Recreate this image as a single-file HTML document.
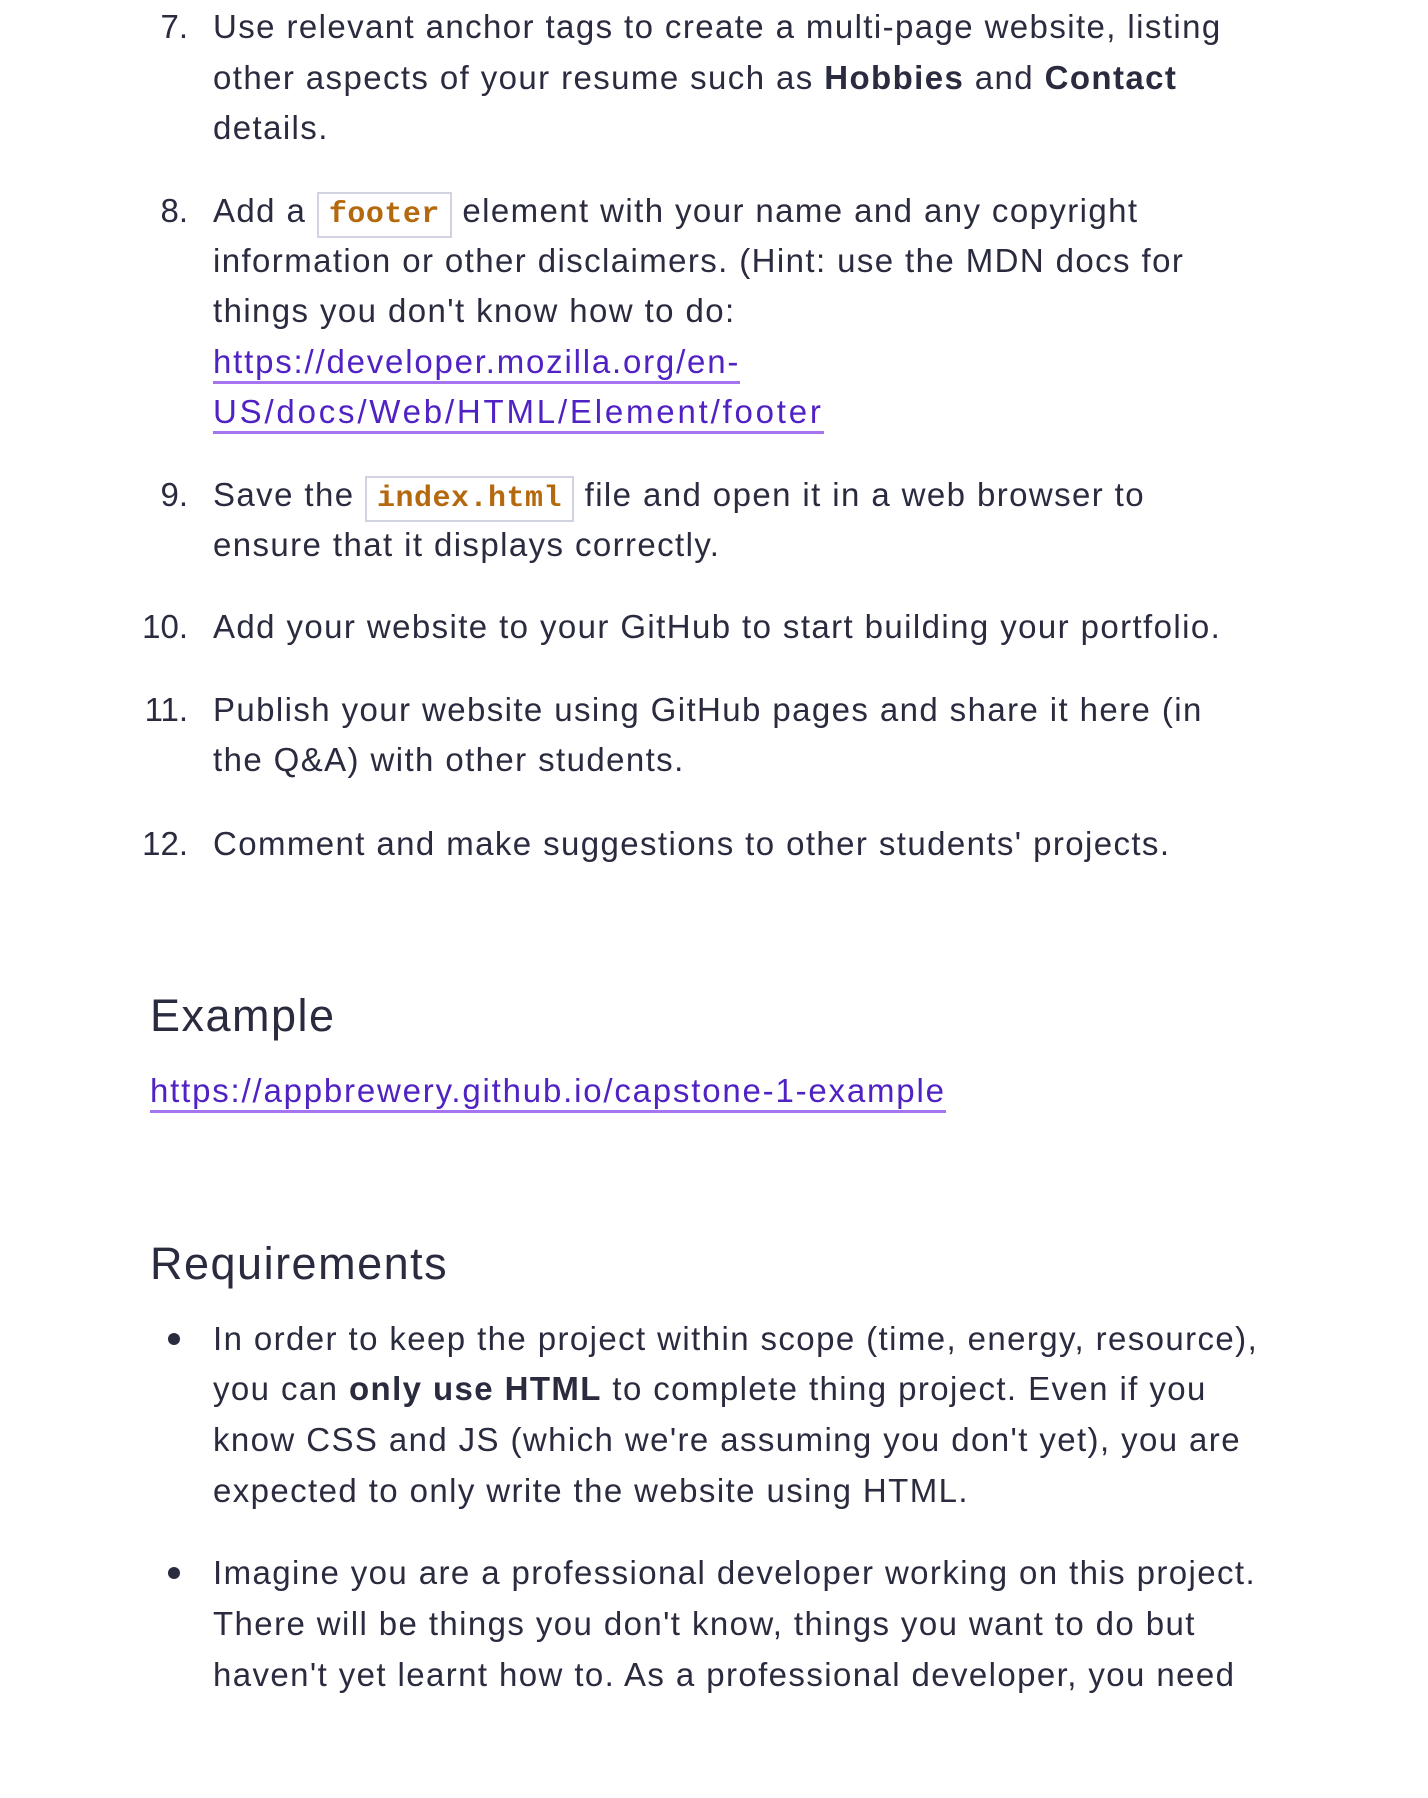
<!DOCTYPE html>
<html><head><meta charset="utf-8"><style>
html,body{margin:0;padding:0;background:#fff;}
body{width:1428px;height:1798px;position:relative;overflow:hidden;font-family:"Liberation Sans",sans-serif;color:#2a2b3f;font-size:33px;letter-spacing:1.4px;}
.l{position:absolute;left:213px;height:50px;line-height:50px;white-space:nowrap;}
.n{position:absolute;width:60px;left:128px;text-align:right;height:50px;line-height:50px;letter-spacing:0;}
.b{position:absolute;left:168px;width:12px;height:12px;border-radius:50%;background:#2a2b3f;}
a{color:#5022c3;text-decoration:none;border-bottom:3px solid #a774f0;padding-bottom:1px;}
code{font-family:"Liberation Mono",monospace;font-weight:bold;color:#b4690e;border:2px solid #d1d4e0;padding:4px 10px;font-size:30px;letter-spacing:0.5px;}
h{position:absolute;left:150px;font-size:45px;white-space:nowrap;letter-spacing:1.5px;}
</style></head><body>
<div class="n" style="top:2px">7.</div>
<div class="l" style="top:2px">Use relevant anchor tags to create a multi-page website, listing</div>
<div class="l" style="top:53px">other aspects of your resume such as <b>Hobbies</b> and <b>Contact</b></div>
<div class="l" style="top:103px">details.</div>

<div class="n" style="top:186px">8.</div>
<div class="l" style="top:186px">Add a <code>footer</code> element with your name and any copyright</div>
<div class="l" style="top:236px">information or other disclaimers. (Hint: use the MDN docs for</div>
<div class="l" style="top:286px">things you don't know how to do:</div>
<div class="l" style="top:337px;letter-spacing:1.8px"><a>https://developer.mozilla.org/en-</a></div>
<div class="l" style="top:387px;letter-spacing:2.8px"><a>US/docs/Web/HTML/Element/footer</a></div>

<div class="n" style="top:470px">9.</div>
<div class="l" style="top:470px">Save the <code>index.html</code> file and open it in a web browser to</div>
<div class="l" style="top:520px">ensure that it displays correctly.</div>

<div class="n" style="top:602px">10.</div>
<div class="l" style="top:602px">Add your website to your GitHub to start building your portfolio.</div>

<div class="n" style="top:685px">11.</div>
<div class="l" style="top:685px">Publish your website using GitHub pages and share it here (in</div>
<div class="l" style="top:735px">the Q&amp;A) with other students.</div>

<div class="n" style="top:819px">12.</div>
<div class="l" style="top:819px">Comment and make suggestions to other students' projects.</div>

<h style="top:990px">Example</h>
<div class="l" style="top:1066px;left:150px;letter-spacing:1.8px"><a>https://appbrewery.github.io/capstone-1-example</a></div>

<h style="top:1238px">Requirements</h>

<div class="b" style="top:1333px"></div>
<div class="l" style="top:1314px">In order to keep the project within scope (time, energy, resource),</div>
<div class="l" style="top:1364px">you can <b>only use HTML</b> to complete thing project. Even if you</div>
<div class="l" style="top:1415px">know CSS and JS (which we're assuming you don't yet), you are</div>
<div class="l" style="top:1466px">expected to only write the website using HTML.</div>

<div class="b" style="top:1567px"></div>
<div class="l" style="top:1548px">Imagine you are a professional developer working on this project.</div>
<div class="l" style="top:1599px">There will be things you don't know, things you want to do but</div>
<div class="l" style="top:1650px">haven't yet learnt how to. As a professional developer, you need</div>
</body></html>
